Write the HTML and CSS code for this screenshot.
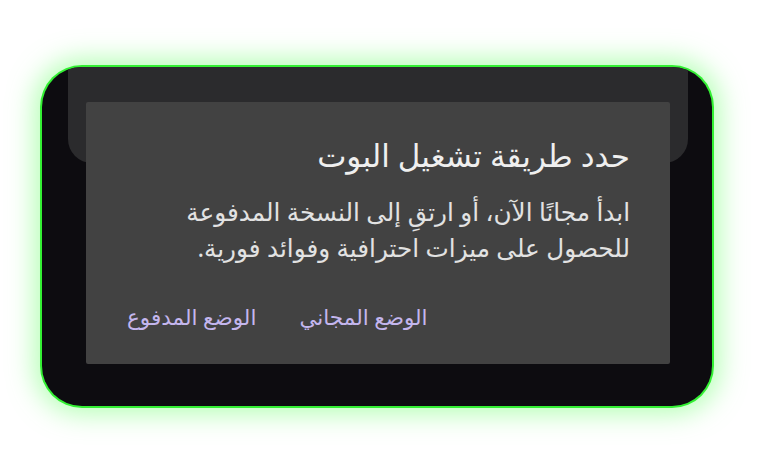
FILE: index.html
```html
<!DOCTYPE html>
<html lang="ar" dir="rtl">
<head>
<meta charset="utf-8">
<link rel="stylesheet" href="styles.css">
</head>
<body>
<div class="page">
  <div class="frame">
    <div class="top-panel"></div>
    <div class="dialog">
      <h1 class="title">حدد طريقة تشغيل البوت</h1>
      <p class="message">ابدأ مجانًا الآن، أو ارتقِ إلى النسخة المدفوعة<br>للحصول على ميزات احترافية وفوائد فورية.</p>
      <div class="actions">
        <span class="action">الوضع المجاني</span>
        <span class="action">الوضع المدفوع</span>
      </div>
    </div>
  </div>
</div>
</body>
</html>
```
FILE: styles.css
```css
html, body {
  margin: 0;
  padding: 0;
  background: #ffffff;
}
.page {
  width: 780px;
  height: 470px;
  padding: 67px 0 0 42px;
  box-sizing: border-box;
  direction: ltr;
}
.frame {
  width: 670px;
  height: 339px;
  background: #0d0c10;
  border-radius: 40px;
  box-shadow: 0 0 0 2px #33f033, 0 0 26px 8px rgba(110, 255, 110, 0.5);
  overflow: hidden;
  display: flex;
  flex-direction: column;
}
.top-panel {
  height: 96px;
  margin: 0 24px 0 26px;
  background: #2b2b2d;
  border-radius: 0 0 24px 24px;
}
.dialog {
  direction: rtl;
  margin: -61px 42px 0 44px;
  height: 262px;
  box-sizing: border-box;
  background: #424242;
  border-radius: 2px;
  padding: 33px 40px 0 41px;
  font-family: "Noto Sans", "DejaVu Sans", sans-serif;
}
.title {
  margin: 0;
  font-size: 31px;
  font-weight: 400;
  line-height: 40px;
  color: #efefef;
}
.message {
  margin: 19px 0 0 0;
  font-size: 24.7px;
  line-height: 36px;
  color: #e2e2e2;
}
.actions {
  display: flex;
  justify-content: flex-end;
  gap: 43px;
  margin-top: 36px;
}
.action {
  font-size: 21.5px;
  line-height: 30px;
  color: #c4b6ee;
}
```
